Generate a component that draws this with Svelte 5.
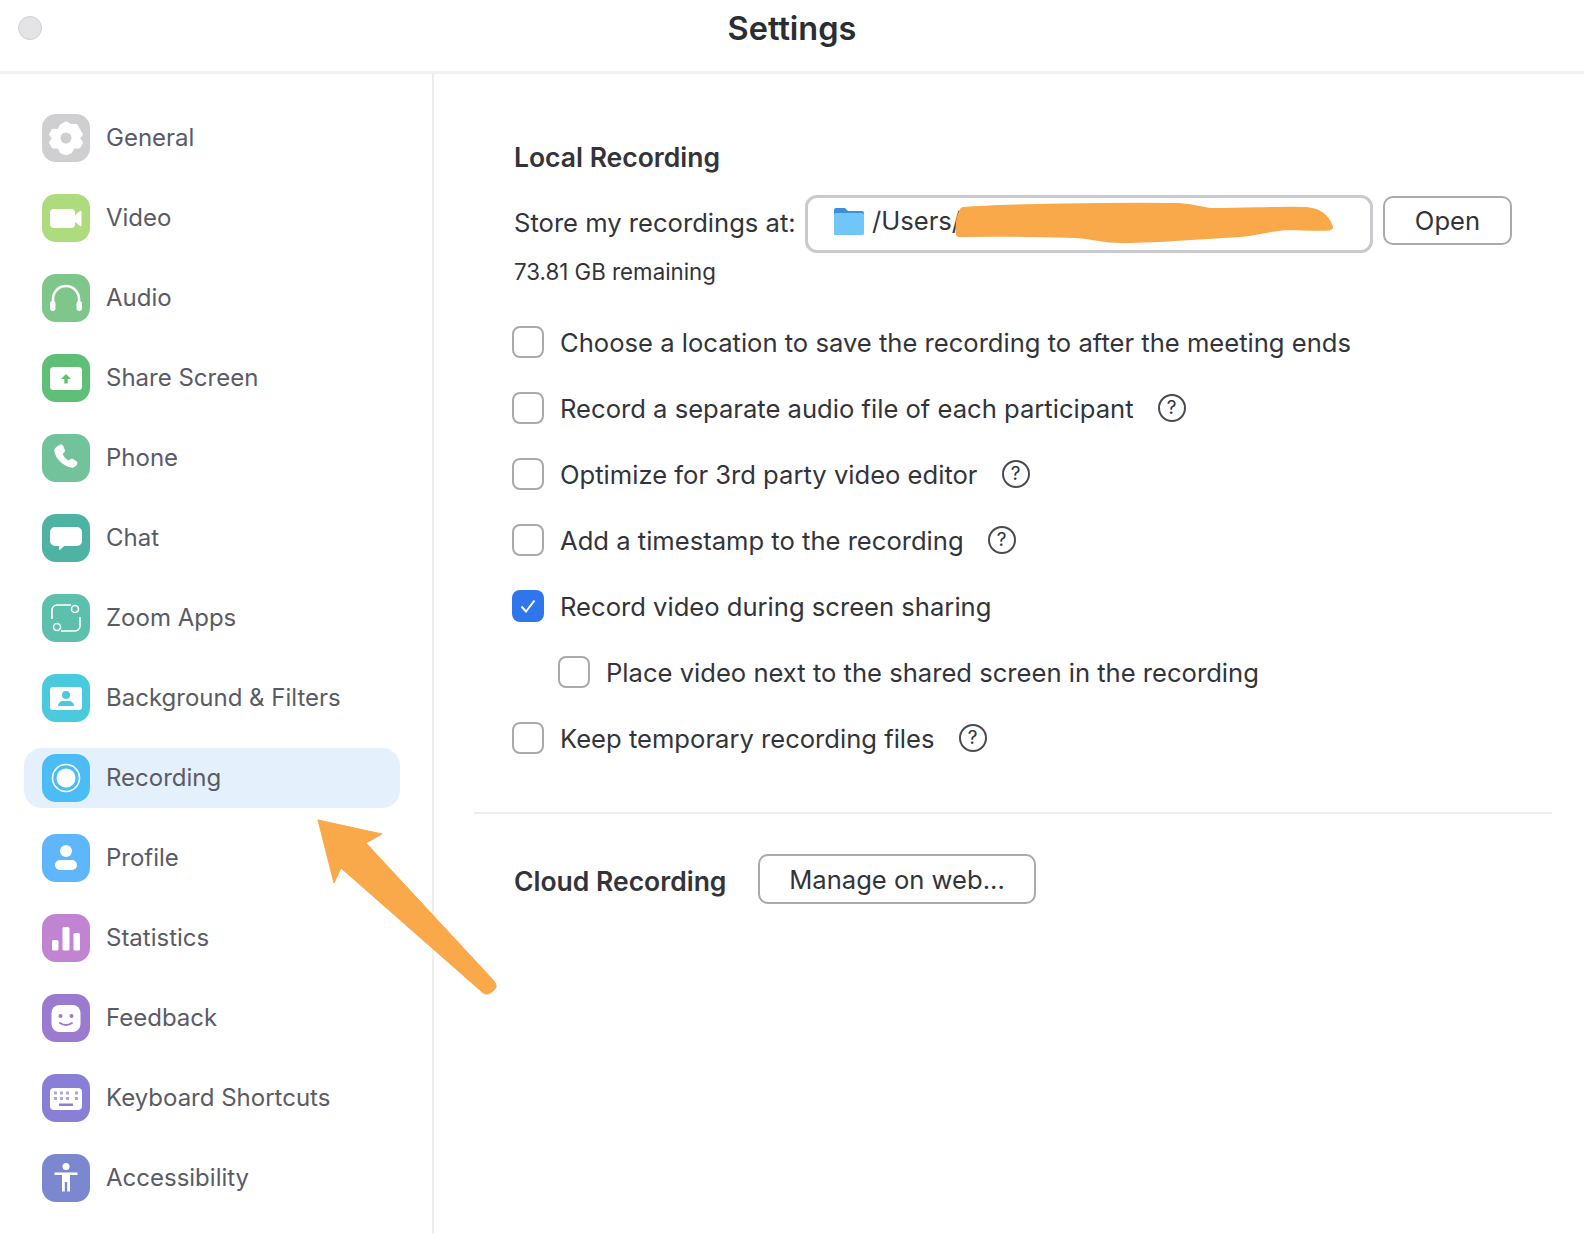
<script>
  const navItems = [
    { id: "general", label: "General", color: "#cfcfd1" },
    { id: "video", label: "Video", color: "#aedb7e" },
    { id: "audio", label: "Audio", color: "#7fc68a" },
    { id: "share", label: "Share Screen", color: "#5fbf76" },
    { id: "phone", label: "Phone", color: "#72c29c" },
    { id: "chat", label: "Chat", color: "#4fb3a4" },
    { id: "apps", label: "Zoom Apps", color: "#5cc0ad" },
    { id: "background", label: "Background & Filters", color: "#4bcade" },
    { id: "recording", label: "Recording", color: "#4cbcf5", active: true },
    { id: "profile", label: "Profile", color: "#60b6fb" },
    { id: "statistics", label: "Statistics", color: "#c184d2" },
    { id: "feedback", label: "Feedback", color: "#9a7bcf" },
    { id: "keyboard", label: "Keyboard Shortcuts", color: "#8a7fd6" },
    { id: "accessibility", label: "Accessibility", color: "#7b88cf" },
  ];

  const options = [
    { label: "Choose a location to save the recording to after the meeting ends" },
    { label: "Record a separate audio file of each participant", help: true },
    { label: "Optimize for 3rd party video editor", help: true },
    { label: "Add a timestamp to the recording", help: true },
    { label: "Record video during screen sharing", checked: true },
    { label: "Place video next to the shared screen in the recording", nested: true },
    { label: "Keep temporary recording files", help: true },
  ];
</script>

{#snippet glyph(id, color)}
  {#if id === "general"}
    <path fill="#fff" d="M24 8.500l5 2.600 5.500-.1 2.700 4.800 2.800 4.700-2.800 3.500 2.800 4.700-2.800 4.700-5.500.2-2.700 4.800-5 1.900-5-1.900-2.700-4.800-5.500-.2-2.800-4.700 2.800-4.700-2.800-3.500 2.800-4.700 5.500.1 2.700-4.800z" stroke="#fff" stroke-width="2" stroke-linejoin="round" />
    <circle cx="24" cy="24" r="5.500" fill={color} />
  {:else if id === "video"}
    <rect x="8" y="15" width="25" height="19" rx="4" fill="#fff" />
    <path fill="#fff" d="M32 22l6-5c.6-.4 1.500 0 1.500.8v13.400c0 .8-.9 1.200-1.500.8l-6-5z" />
  {:else if id === "audio"}
    <path fill="none" stroke="#fff" stroke-width="2.600" d="M11 30v-5a13 13 0 0 1 26 0v5" />
    <rect x="8" y="27" width="5.500" height="10" rx="2.700" fill="#fff" />
    <rect x="34.500" y="27" width="5.500" height="10" rx="2.700" fill="#fff" />
  {:else if id === "share"}
    <rect x="8" y="13" width="32" height="23" rx="3.500" fill="#fff" />
    <path fill={color} d="M24 20l5 5h-3.300v4.500h-3.400V25H19z" />
  {:else if id === "phone"}
    <path fill="#fff" d="M17.500 11c1.500-.8 3-.5 3.700 1l1.500 3.400c.5 1.200.2 2.300-.7 3.100l-1.300 1.200c.9 2.900 3 5.300 5.900 6.800l1.500-1.100c1-.7 2.100-.7 3.100-.1l2.900 1.700c1.400.9 1.600 2.500.7 3.800-1.300 2-3.300 3.300-5.700 2.800C20.800 32 13 24.200 12.300 16.800c-.2-2.500 2.700-4.500 5.200-5.800z" />
  {:else if id === "chat"}
    <path fill="#fff" d="M13 13h22a5 5 0 0 1 5 5v9a5 5 0 0 1-5 5H22l-3.500 3.600c-.6.500-1.500.1-1.500-.6V32h-4a5 5 0 0 1-5-5v-9a5 5 0 0 1 5-5z" />
  {:else if id === "apps"}
    <g fill="none" stroke="#fff" stroke-width="1.600">
      <path d="M29 11H15a5 5 0 0 0-5 5v9M19 37h14a5 5 0 0 0 5-5v-9" />
      <circle cx="33" cy="15" r="3.500" />
      <circle cx="15" cy="33" r="3.500" />
    </g>
  {:else if id === "background"}
    <rect x="8" y="13" width="32" height="23" rx="3" fill="#fff" />
    <circle cx="24" cy="21" r="4" fill={color} />
    <path fill={color} d="M16 32c0-3 2.500-5 5-5h6c2.500 0 5 2 5 5z" />
  {:else if id === "recording"}
    <circle cx="24" cy="24" r="13.500" fill="none" stroke="#fff" stroke-width="1.600" />
    <circle cx="24" cy="24" r="9.500" fill="#fff" />
  {:else if id === "profile"}
    <circle cx="24" cy="17" r="6" fill="#fff" />
    <rect x="13" y="26" width="22" height="10" rx="5" fill="#fff" />
  {:else if id === "statistics"}
    <rect x="10" y="26" width="6.500" height="10.500" rx="1.500" fill="#fff" />
    <rect x="20.500" y="13" width="7" height="23.500" rx="1.500" fill="#fff" />
    <rect x="31.500" y="19" width="6.500" height="17.500" rx="1.500" fill="#fff" />
  {:else if id === "feedback"}
    <rect x="9.500" y="11" width="29" height="27" rx="8" fill="#fff" />
    <circle cx="18.500" cy="22" r="2" fill={color} />
    <circle cx="29.500" cy="22" r="2" fill={color} />
    <path fill="none" stroke={color} stroke-width="2" stroke-linecap="round" d="M18 29c3.500 2.500 8.500 2.500 12 0" />
  {:else if id === "keyboard"}
    <rect x="8" y="14" width="32" height="22" rx="4" fill="#fff" />
    <g fill={color} opacity="0.7">
      <rect x="12" y="17.500" width="3" height="3" /><rect x="18" y="17.500" width="3" height="3" />
      <rect x="24" y="17.500" width="3" height="3" /><rect x="33" y="17.500" width="3" height="3" />
      <rect x="12" y="23" width="3" height="3" /><rect x="18" y="23" width="3" height="3" />
      <rect x="24" y="23" width="3" height="3" /><rect x="33" y="23" width="3" height="3" />
    </g>
    <rect x="17" y="29.500" width="14" height="2.500" fill={color} />
  {:else if id === "accessibility"}
    <circle cx="24" cy="12.500" r="3.500" fill="#fff" />
    <path fill="#fff" d="M12.500 18.500h23v2.400H28v16.600h-2.800V28h-2.400v9.500H20V20.900h-7.500z" />
  {/if}
{/snippet}

<div class="page">
  <header class="titlebar">
    <span class="close-dot"></span>
    <h1>Settings</h1>
  </header>

  <div class="body">
    <nav class="sidebar">
      {#each navItems as item}
        <div class="nav-row" class:active={item.active}>
          <svg class="nav-icon" viewBox="0 0 48 48" width="48" height="48" aria-hidden="true">
            <rect width="48" height="48" rx="14" fill={item.color} />
            {@render glyph(item.id, item.color)}
          </svg>
          <span>{item.label}</span>
        </div>
      {/each}
    </nav>

    <main class="content">
      <section class="local">
        <h2>Local Recording</h2>
        <div class="store-row">
          <span class="store-label">Store my recordings at:</span>
          <div class="path-box">
            <svg viewBox="0 0 30 28" width="30" height="28" aria-hidden="true">
              <path fill="#3f8fd6" d="M0 3a2 2 0 0 1 2-2h9l3 3h14a2 2 0 0 1 2 2v6H0z" />
              <rect y="6" width="30" height="22" rx="1.500" fill="#70c6f9" />
            </svg>
            <span>/Users/</span>
          </div>
          <button class="btn open">Open</button>
        </div>
        <p class="remaining">73.81 GB remaining</p>

        <div class="options">
          {#each options as opt}
            <div class="option" class:nested={opt.nested}>
              <span class="box" class:checked={opt.checked}>
                {#if opt.checked}
                  <svg viewBox="0 0 32 32" width="32" height="32" aria-hidden="true">
                    <path fill="none" stroke="#fff" stroke-width="2" d="M9.500 16.500l4.500 5 8.500-11" />
                  </svg>
                {/if}
              </span>
              <span>{opt.label}</span>
              {#if opt.help}
                <span class="help">?</span>
              {/if}
            </div>
          {/each}
        </div>
      </section>

      <section class="cloud">
        <h2>Cloud Recording</h2>
        <button class="btn manage">Manage on web...</button>
      </section>
    </main>
  </div>

  <!-- annotations painted on top of the screenshot -->
  <svg class="annotations" viewBox="0 0 1584 1234" width="1584" height="1234" aria-hidden="true">
    <path fill="#f9a84a" stroke="#f9a84a" stroke-width="6" stroke-linejoin="round" d="M963 210C1000 207 1120 205 1178 206C1195 207 1205 211 1214 211C1250 211 1285 209 1306 210C1318 211 1326 216 1330 227C1322 229 1300 227 1288 227C1268 228 1258 233 1240 234C1200 236 1160 240 1122 240C1100 240 1095 236 1075 235C1040 234 1000 233 959 234C958 226 958 218 963 210z" />
    <path fill="#f9a84a" stroke="#f9a84a" stroke-width="1" stroke-linejoin="round" d="M318 820L382 834L366 843L494 981C497 985 497 988 493 991L490 993C487 995 484 994 481 991L341 868L334 883z" />
  </svg>
</div>

<style>
  :global(body) {
    background: #fff;
    font-family: Inter, "Liberation Sans", sans-serif;
  }
  .page {
    position: relative;
    width: 1584px;
    height: 1234px;
    overflow: hidden;
    display: flex;
    flex-direction: column;
    color: #33343a;
  }
  .titlebar {
    flex: none;
    height: 74px;
    display: flex;
    align-items: center;
    justify-content: center;
    padding-bottom: 14px;
    box-sizing: border-box;
    border-bottom: 3px solid #eff1f7;
    position: relative;
  }
  .titlebar h1 {
    margin: 0;
    font-size: 32.500px;
    font-weight: 600;
    color: #2c2d33;
  }
  .close-dot {
    position: absolute;
    left: 18px;
    top: 16px;
    width: 24px;
    height: 24px;
    box-sizing: border-box;
    border-radius: 50%;
    background: #e4e4e6;
    border: 1px solid #cfcfd2;
  }
  .body {
    flex: 1;
    display: grid;
    grid-template-columns: 434px 1fr;
    min-height: 0;
  }
  .sidebar {
    border-right: 2px solid #eeeef1;
    padding: 34px 0 0 24px;
    display: flex;
    flex-direction: column;
    gap: 20px;
  }
  .nav-row {
    width: 376px;
    height: 60px;
    flex: none;
    box-sizing: border-box;
    padding-left: 18px;
    display: flex;
    align-items: center;
    gap: 16px;
    border-radius: 18px;
    font-size: 24px;
    color: #5a5b66;
  }
  .nav-row span {
    margin-top: -2px;
  }
  .nav-row.active {
    background: #e5f0fd;
  }
  .nav-icon {
    flex: none;
  }
  .content {
    padding: 68px 32px 0 40px;
    font-size: 25.600px;
    min-width: 0;
  }
  h2 {
    margin: 0;
    font-size: 26.500px;
    line-height: 30px;
    font-weight: 600;
    color: #33343a;
  }
  .local {
    padding: 0 0 58px 40px;
    border-bottom: 2px solid #eeeef1;
  }
  .store-row {
    margin-top: 23px;
    display: flex;
    align-items: center;
  }
  .store-label {
    width: 291px;
    flex: none;
    margin-top: -3px;
  }
  .path-box {
    width: 568px;
    height: 58px;
    flex: none;
    box-sizing: border-box;
    border: 3px solid #c9c9ce;
    border-radius: 12px;
    display: flex;
    align-items: center;
    gap: 8px;
    padding: 0 0 7px 26px;
  }
  .path-box svg {
    flex: none;
    margin-top: 1px;
  }
  .btn {
    font: inherit;
    color: #33343a;
    background: #fff;
    border: 2px solid #a9a9ae;
    border-radius: 10px;
    padding: 0;
  }
  .btn.open {
    width: 129px;
    height: 49px;
    margin: -7px 0 0 10px;
  }
  .remaining {
    margin: 6px 0 0;
    font-size: 22.300px;
    line-height: 26px;
  }
  .options {
    margin-top: 41px;
    display: flex;
    flex-direction: column;
    gap: 34px;
  }
  .option {
    height: 32px;
    display: flex;
    align-items: center;
    gap: 16px;
    margin-left: -2px;
  }
  .option.nested {
    margin-left: 44px;
  }
  .box {
    width: 32px;
    height: 32px;
    flex: none;
    box-sizing: border-box;
    border: 2px solid #a9a9ae;
    border-radius: 8px;
    background: #fff;
    position: relative;
  }
  .box.checked {
    background: #2f76ed;
    border: 0;
  }
  .box svg {
    display: block;
  }
  .help {
    flex: none;
    width: 28px;
    height: 28px;
    box-sizing: border-box;
    margin-left: 8px;
    border: 2px solid #4a4b52;
    border-radius: 50%;
    font-size: 19px;
    line-height: 24px;
    text-align: center;
  }
  .cloud {
    margin-top: 40px;
    padding-left: 40px;
    display: flex;
    align-items: center;
  }
  .cloud h2 {
    width: 244px;
    flex: none;
    margin-top: 4px;
  }
  .btn.manage {
    width: 278px;
    height: 50px;
  }
  .annotations {
    position: absolute;
    left: 0;
    top: 0;
    pointer-events: none;
  }
</style>
